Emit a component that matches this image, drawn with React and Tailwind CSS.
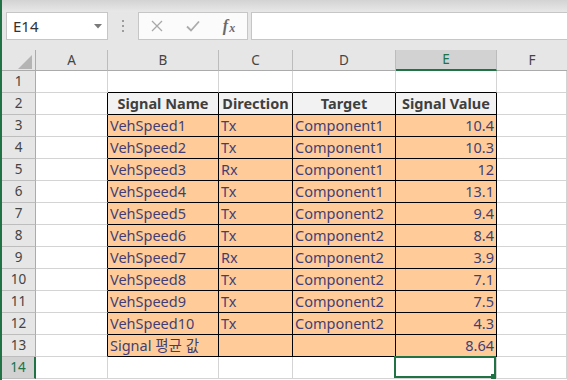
import React from "react";

const COLS = [
  { key: "A", w: "w-[72px]" },
  { key: "B", w: "w-[111px]" },
  { key: "C", w: "w-[74px]" },
  { key: "D", w: "w-[103px]" },
  { key: "E", w: "w-[101px]" },
  { key: "F", w: "flex-1" },
];

const DATA = [
  ["VehSpeed1", "Tx", "Component1", "10.4"],
  ["VehSpeed2", "Tx", "Component1", "10.3"],
  ["VehSpeed3", "Rx", "Component1", "12"],
  ["VehSpeed4", "Tx", "Component1", "13.1"],
  ["VehSpeed5", "Tx", "Component2", "9.4"],
  ["VehSpeed6", "Tx", "Component2", "8.4"],
  ["VehSpeed7", "Rx", "Component2", "3.9"],
  ["VehSpeed8", "Tx", "Component2", "7.1"],
  ["VehSpeed9", "Tx", "Component2", "7.5"],
  ["VehSpeed10", "Tx", "Component2", "4.3"],
];

// Sheet contents keyed by row number, columns B..E
const SHEET = {
  2: { header: true, cells: ["Signal Name", "Direction", "Target", "Signal Value"] },
  13: { cells: ["Signal 평균 값", "", "", "8.64"] },
};
DATA.forEach((r, i) => {
  SHEET[i + 3] = { cells: r };
});

const cellFont = "font-['Noto_Sans','Noto_Sans_CJK_KR',sans-serif] text-[14.5px] leading-[21px]";

function clsx(...a) {
  return a.filter(Boolean).join(" ");
}

function Cell({ row, col }) {
  const inTableRow = row >= 2 && row <= 13;
  const tableCol = ["B", "C", "D", "E"].includes(col.key);
  const rightBlack = inTableRow && ["A", "B", "C", "D", "E"].includes(col.key);
  const bottomBlack = tableCol && row >= 1 && row <= 13;
  const entry = SHEET[row];
  const idx = ["B", "C", "D", "E"].indexOf(col.key);
  const text = entry && idx >= 0 ? entry.cells[idx] : "";
  const isHeader = entry && entry.header && idx >= 0;
  const isData = entry && !entry.header && idx >= 0;
  const isNumber = isData && idx === 3;
  const selected = row === 14 && col.key === "E";

  return (
    <div
      className={clsx(
        col.w,
        "relative h-[22px] shrink-0 border-r border-b whitespace-nowrap overflow-visible",
        cellFont,
        rightBlack ? "border-r-black" : "border-r-[#d4d4d4]",
        bottomBlack ? "border-b-black" : "border-b-[#d4d4d4]",
        isHeader && "bg-[#f2f2f2] text-[#3f3f3f] font-bold text-center",
        isData && "bg-[#ffcc99] text-[#3f3f76]",
        isData && (isNumber ? "text-right pr-[2px]" : "pl-[2px]")
      )}
    >
      {text}
      {selected && (
        <div className="absolute -left-[2px] -top-[1px] right-0 bottom-0 border-2 border-[#217346]">
          <div className="absolute -right-[2px] -bottom-[3px] w-[5px] h-[5px] bg-[#217346]" />
        </div>
      )}
    </div>
  );
}

function RowHeader({ n }) {
  const sel = n === 14;
  return (
    <div
      className={clsx(
        "w-[34px] h-[22px] shrink-0 flex items-center justify-center border-b font-['Noto_Sans',sans-serif] text-[13.5px]",
        sel
          ? "bg-[#d2d2d2] text-[#217346] border-r-2 border-r-[#217346] border-b-[#bdbdbd]"
          : "bg-[#e6e6e6] text-[#444] border-r border-r-[#ababab] border-b-[#bdbdbd]"
      )}
    >
      {n}
    </div>
  );
}

function ColumnHeaders() {
  return (
    <div className="flex h-[21px] shrink-0">
      <div className="w-[34px] h-[21px] shrink-0 bg-[#e6e6e6] border-r border-b border-[#ababab] flex items-end justify-end pr-[3px] pb-[1px]">
        <svg width="14" height="14" viewBox="0 0 14 14">
          <polygon points="14,0 14,14 0,14" fill="#b4b4b4" />
        </svg>
      </div>
      {COLS.map((c) => {
        const sel = c.key === "E";
        return (
          <div
            key={c.key}
            className={clsx(
              c.w,
              "h-[21px] shrink-0 flex items-center justify-center font-['Noto_Sans',sans-serif] text-[13.5px]",
              c.key !== "F" && "border-r border-r-[#bcbcbc]",
              sel
                ? "bg-[#d2d2d2] text-[#217346] border-b-2 border-b-[#217346]"
                : "bg-[#e6e6e6] text-[#444] border-b border-b-[#ababab]"
            )}
          >
            {c.key}
          </div>
        );
      })}
    </div>
  );
}

function FormulaBar() {
  return (
    <div className="shrink-0 bg-[#e6e6e6]">
      <div className="h-[12px] bg-gradient-to-b from-[#d3d3d3] to-[#e8e8e8]" />
      <div className="flex h-[28px] pl-[4px]">
        <div className="w-[102px] h-[28px] bg-white border border-[#c6c6c6] flex items-center justify-between pl-[6px] pr-[5px]">
          <span className="font-['Noto_Sans',sans-serif] text-[15px] text-[#333]">E14</span>
          <svg width="8" height="5" viewBox="0 0 8 5">
            <polygon points="0,0 8,0 4,4.5" fill="#7a7a7a" />
          </svg>
        </div>
        <div className="w-[30px] flex flex-col items-center justify-center gap-[3px]">
          <div className="w-[2px] h-[2px] bg-[#9c9c9c]" />
          <div className="w-[2px] h-[2px] bg-[#9c9c9c]" />
          <div className="w-[2px] h-[2px] bg-[#9c9c9c]" />
        </div>
        <div className="w-[110px] h-[28px] bg-[#fbfbfb] border border-[#c6c6c6] flex">
          <div className="w-[36px] flex items-center justify-center">
            <svg width="12" height="12" viewBox="0 0 12 12">
              <path d="M1 1 L11 11 M11 1 L1 11" stroke="#a8a8a8" strokeWidth="1.3" fill="none" />
            </svg>
          </div>
          <div className="w-[36px] flex items-center justify-center">
            <svg width="14" height="12" viewBox="0 0 14 12">
              <path d="M1 6.5 L5 10.5 L13 1.5" stroke="#ababab" strokeWidth="1.8" fill="none" />
            </svg>
          </div>
          <div className="w-[36px] flex items-center justify-center font-['Liberation_Serif',serif] italic font-bold text-[#6a6a6a] leading-none">
            <span className="text-[16px]">f</span>
            <span className="text-[12px] mt-[4px] ml-[1px]">x</span>
          </div>
        </div>
        <div className="flex-1 ml-[3px] h-[28px] bg-white border-y border-l border-[#c6c6c6]" />
      </div>
      <div className="h-[10px]" />
    </div>
  );
}

export default function App() {
  const rows = Array.from({ length: 14 }, (_, i) => i + 1);
  return (
    <div className="w-[567px] h-[380px] overflow-hidden bg-white border-l-2 border-l-[#217346] flex flex-col">
      <FormulaBar />
      <ColumnHeaders />
      {rows.map((r) => (
        <div key={r} className="flex shrink-0">
          <RowHeader n={r} />
          {COLS.map((c) => (
            <Cell key={c.key} row={r} col={c} />
          ))}
        </div>
      ))}
    </div>
  );
}
